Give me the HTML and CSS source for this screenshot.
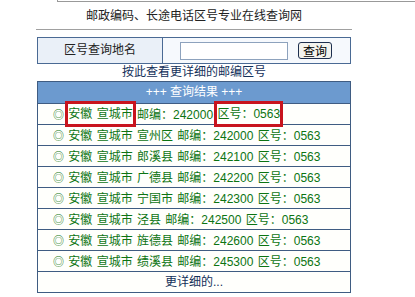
FILE: index.html
```html
<!DOCTYPE html>
<html lang="zh-CN">
<head>
    <meta charset="UTF-8">
    <title>区号查询</title>
    <link rel="stylesheet" href="styles.css">
</head>
<body>
    <div class="top-box"></div>
    <div class="wrap">
        <div class="site-title">邮政编码、长途电话区号专业在线查询网</div>
        <div class="rule"></div>
        <div class="search-form">
            <div class="label-cell">区号查询地名</div>
            <div class="input-cell">
                <input type="text" class="search-input">
                <button class="search-btn">查询</button>
            </div>
        </div>
        <a class="more-link" href="#">按此查看更详细的邮编区号</a>
        <div class="results">
            <div class="results-head">+++ 查询结果 +++</div>
            <div class="row"><span class="dot">◎</span> <span class="mark">安徽 宣城市</span> 邮编：242000 <span class="mark">区号：0563</span></div>
            <div class="row"><span class="dot">◎</span> 安徽 宣城市 宣州区 邮编：242000 区号：0563</div>
            <div class="row"><span class="dot">◎</span> 安徽 宣城市 郎溪县 邮编：242100 区号：0563</div>
            <div class="row"><span class="dot">◎</span> 安徽 宣城市 广德县 邮编：242200 区号：0563</div>
            <div class="row"><span class="dot">◎</span> 安徽 宣城市 宁国市 邮编：242300 区号：0563</div>
            <div class="row"><span class="dot">◎</span> 安徽 宣城市 泾县 邮编：242500 区号：0563</div>
            <div class="row"><span class="dot">◎</span> 安徽 宣城市 旌德县 邮编：242600 区号：0563</div>
            <div class="row"><span class="dot">◎</span> 安徽 宣城市 绩溪县 邮编：245300 区号：0563</div>
            <div class="row row-more">更详细的...</div>
        </div>
    </div>
</body>
</html>
```

FILE: styles.css
```css
body {
    margin: 0;
    padding: 0;
    background: #fff;
    font-family: "Liberation Sans", "Noto Sans CJK SC", sans-serif;
    font-size: 12px;
    color: #222;
}
.top-box {
    height: 1px;
    margin-left: 57px;
    border-left: 1px solid #999;
    border-bottom: 1px solid #999;
}
.wrap {
    width: 316px;
    margin-left: 36px;
}
.site-title {
    margin-top: 5px;
    line-height: 18px;
    text-align: center;
    color: #222;
}
.rule {
    margin-top: 4px;
    border-top: 1px solid #a0a0a0;
}
.search-form {
    display: flex;
    margin: 7px 1px 0;
    height: 25px;
    border: 1px solid #4a6a94;
}
.label-cell {
    width: 124px;
    border-right: 1px solid #4a6a94;
    background: #eaf0f8;
    line-height: 25px;
    text-align: center;
}
.input-cell {
    flex: 1;
    display: flex;
    align-items: center;
    gap: 10px;
    padding-left: 17px;
    background: #f6f9fd;
}
.search-input {
    width: 106px;
    height: 16px;
    padding: 0;
    border: 1px solid #8da2bd;
    background: #fff;
}
.search-btn {
    height: 17px;
    padding: 0 4px;
    font: 12px "Noto Sans CJK SC", sans-serif;
    line-height: 14px;
    color: #000;
    background: #f3f3ee;
    border: 1px solid #1d2f4f;
    border-radius: 3px;
}
.more-link {
    display: block;
    line-height: 17px;
    text-align: center;
    color: #13305a;
    text-decoration: none;
}
.results {
    margin: 0 1px;
    border: 1px solid #3f5c82;
}
.results-head {
    height: 21px;
    line-height: 21px;
    text-align: center;
    color: #fff;
    background: #6c9acf;
}
.row {
    height: 20px;
    line-height: 20px;
    padding-left: 15px;
    border-top: 1px solid #3f5c82;
    background: #fffffc;
    color: #0c7412;
    word-spacing: 1px;
    white-space: nowrap;
}
.dot {
    font-family: "Noto Sans CJK SC", sans-serif;
    font-size: 11px;
}
.mark {
    display: inline-block;
    height: 20px;
    vertical-align: top;
    outline: 3px solid #c8141e;
}
.row-more {
    padding-left: 0;
    text-align: center;
    color: #13305a;
}
```
